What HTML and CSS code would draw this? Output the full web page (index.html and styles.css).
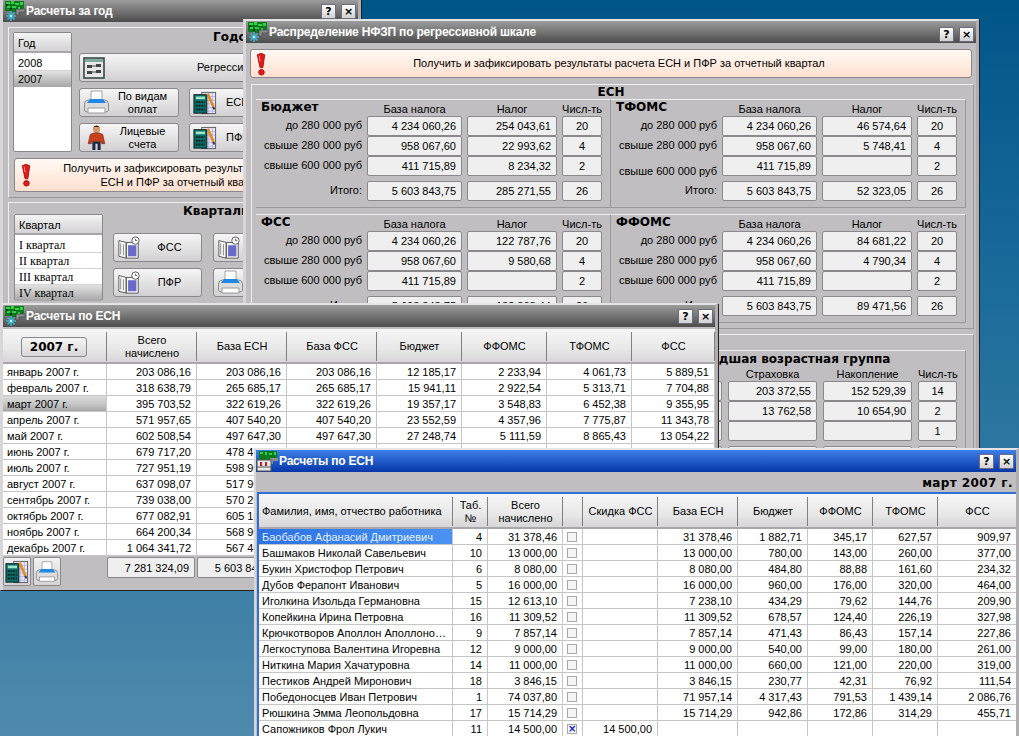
FILE: index.html
```html
<!DOCTYPE html>
<html lang="ru">
<head>
<meta charset="utf-8">
<title>Расчеты</title>
<link rel="stylesheet" href="styles.css">
</head>
<body>
<svg class="defs" aria-hidden="true">
  <symbol id="i-app" viewBox="0 0 24 22">
    <path d="M2 1h19v7l-2 2h-3v2H9v-1H2z" fill="#0a7a1c"/>
    <path d="M3 2h4v2H3zM8 1h3v3H8zM12 3h4v2h-4zM17 2h3v3h-3zM4 6h3v2H4zM9 6h4v2H9zM15 7h2v2h-2z" fill="#35d04a"/>
    <path d="M3 4h2v2H3zM11 5h2v1h-2zM7 8h2v2H7z" fill="#063c10"/>
    <path d="M13 9h9v3h-6v3h-3z" fill="#8c8c8c" stroke="#3c3c3c" stroke-width=".6"/>
    <path d="M8 11v10M3 16h10M4.500 12.500l7 7M11.500 12.500l-7 7" stroke="#3fb4cf" stroke-width="1.600"/>
    <path d="M7 15h2v2H7z" fill="#cfeef5"/>
  </symbol>
  <symbol id="i-app2" viewBox="0 0 24 22">
    <path d="M3 1h18v8h-4v3H9v-1H3z" fill="#0a7a1c"/>
    <path d="M4 2h3v2H4zM9 2h2v3H9zM13 3h3v2h-3zM18 2h2v3h-2z" fill="#35d04a"/>
    <path d="M14 8h8v3h-5v3h-3z" fill="#8c8c8c"/>
    <rect x="1" y="10" width="14" height="11" fill="#e8e8e8" stroke="#555"/>
    <path d="M1 17h14" stroke="#555"/>
    <path d="M4 12h2v4H4zM9 12h2v4H9z" fill="#c02020"/>
  </symbol>
  <symbol id="i-print" viewBox="0 0 27 27">
    <path d="M8 2h11v11H8z" fill="#fff" stroke="#a4a4a4"/>
    <path d="M1.500 15q0-4 4-4h16q4 0 4 4v6q0 2-3 2h-18q-3 0-3-2z" fill="#dcdcdc" stroke="#8c8c8c"/>
    <path d="M7 10h13l3 4H4z" fill="#1f88e4"/>
    <path d="M5 19h17v5H5z" fill="#fff" stroke="#9a9a9a"/>
  </symbol>
  <symbol id="i-calc" viewBox="0 0 26 26">
    <rect x="9.500" y="1.500" width="15" height="23" fill="#e6e6fb" stroke="#555"/>
    <path d="M13 2v22M17 2v22M21 2v22M10 6h14M10 10h14M10 14h14M10 18h14M10 22h14" stroke="#9a9ae0" stroke-width=".6"/>
    <rect x="1" y="4" width="14" height="20" fill="#0c6e68" stroke="#0a1a1a"/>
    <path d="M3 6h10v3H3z" fill="#9fe6c8"/>
    <path d="M3 11h2v2H3zM6 11h2v2H6zM9 11h2v2H9zM12 11h1v2h-1zM3 15h2v2H3zM6 15h2v2H6zM9 15h2v2H9zM12 15h1v2h-1zM3 19h2v2H3zM6 19h2v2H6zM9 19h2v2H9zM12 19h1v2h-1z" fill="#0c2020"/>
    <path d="M16 3l6 14" stroke="#e88c1c" stroke-width="3"/>
    <path d="M22 17l1 3" stroke="#333" stroke-width="2"/>
  </symbol>
  <symbol id="i-man" viewBox="0 0 22 26">
    <circle cx="11" cy="5" r="3.500" fill="#d29a70"/>
    <path d="M7 4q4-5 8 0l-1-1H8z" fill="#3a2414"/>
    <path d="M5 10q6-3 12 0l2 9h-3v-2H6v2H3z" fill="#c8401c" stroke="#6e2010" stroke-width=".6"/>
    <path d="M7 17h8v8h-3v-6h-2v6H7z" fill="#1e2a44"/>
  </symbol>
  <symbol id="i-flow" viewBox="0 0 22 22">
    <rect x="1" y="1" width="20" height="20" fill="#e8e8e8" stroke="#2c3c3c" stroke-width="1.500"/>
    <path d="M2 2h18v3H2z" fill="#7fa8a0"/>
    <path d="M4 8h5v3H4zM13 7h5v3h-5zM4 14h5v3H4zM13 13h5v3h-5z" fill="#444"/>
    <path d="M9 9h4M9 15h4" stroke="#444"/>
  </symbol>
  <symbol id="i-book" viewBox="0 0 26 26">
    <path d="M2 5l8 2v17l-8-2zM10 7h13v17H10z" fill="#f8f8f8" stroke="#555"/>
    <path d="M4 8v12M7 9v12" stroke="#888"/>
    <path d="M12 10h9v12h-9z" fill="#6a6ac8"/>
    <circle cx="20" cy="5" r="4" fill="#fff" stroke="#555"/>
    <path d="M20 3v2h2" stroke="#333" fill="none" stroke-width=".8"/>
  </symbol>
  <symbol id="i-warn" viewBox="0 0 12 26">
    <path d="M2 3q4-3 8 0L8 17H5z" fill="#e41a1a" stroke="#a81010"/>
    <circle cx="6.500" cy="22" r="3" fill="#e41a1a" stroke="#a81010"/>
    <path d="M4 4l1 6" stroke="#ff9a9a"/>
  </symbol>
</svg>

<section class="win w1">
  <header class="title">
    <svg class="appicon"><use href="#i-app"/></svg>
    <span class="caption">Расчеты за год</span>
    <span class="wbtn">?</span><span class="wbtn">×</span>
  </header>
  <div class="group g-year">
    <div class="list list-y">
      <div class="list-h">Год</div>
      <div class="list-r">2008</div>
      <div class="list-r sel">2007</div>
    </div>
    <div class="year-main">
      <h3 class="h-year">Годовые расчеты</h3>
      <div class="btn reg"><svg class="ic22"><use href="#i-flow"/></svg><span class="reg-t">Регрессивная шкала</span></div>
      <div class="year-btns">
        <div class="btn"><svg class="ic27"><use href="#i-print"/></svg><span class="bt">По видам<br>оплат</span></div>
        <div class="btn"><svg class="ic24"><use href="#i-calc"/></svg><span class="bt-l">ЕСН</span></div>
        <div class="btn"><svg class="ic27"><use href="#i-man"/></svg><span class="bt">Лицевые<br>счета</span></div>
        <div class="btn"><svg class="ic24"><use href="#i-calc"/></svg><span class="bt-l">ПФР</span></div>
      </div>
    </div>
    <div class="notice n-year">
      <svg class="warn"><use href="#i-warn"/></svg>
      <span class="n-t">Получить и зафиксировать результаты расчета<br>ЕСН и ПФР за отчетный квартал</span>
    </div>
  </div>
  <div class="group g-q">
    <div class="list list-q">
      <div class="list-h">Квартал</div>
      <div class="list-r">I квартал</div>
      <div class="list-r">II квартал</div>
      <div class="list-r">III квартал</div>
      <div class="list-r sel">IV квартал</div>
    </div>
    <div class="q-main">
      <h3 class="h-q">Квартальные расчеты</h3>
      <div class="q-btns">
        <div class="btn"><svg class="ic24"><use href="#i-book"/></svg><span class="bt">ФСС</span></div>
        <div class="btn"><svg class="ic24"><use href="#i-book"/></svg><span class="bt">ЕСН</span></div>
        <div class="btn"><svg class="ic24"><use href="#i-book"/></svg><span class="bt">ПФР</span></div>
        <div class="btn"><svg class="ic27"><use href="#i-print"/></svg><span class="bt">Печать</span></div>
      </div>
    </div>
  </div>
</section>

<section class="win w2">
  <header class="title">
    <svg class="appicon"><use href="#i-app"/></svg>
    <span class="caption">Распределение НФЗП по регрессивной шкале</span>
    <span class="wbtn">?</span><span class="wbtn">×</span>
  </header>
  <div class="notice n-main">
    <svg class="warn"><use href="#i-warn"/></svg>
    <span class="n-t">Получить и зафиксировать результаты расчета ЕСН и ПФР за отчетный квартал</span>
  </div>
  <div class="group g-esn">
    <h3 class="h-esn">ЕСН</h3>
    <div class="panels">
      <div class="panel">
        <b class="ptitle">Бюджет</b><span class="ch">База налога</span><span class="ch">Налог</span><span class="ch">Числ-ть</span>
        <span class="lab">до 280 000 руб</span><span class="f">4 234 060,26</span><span class="f">254 043,61</span><span class="f c">20</span>
        <span class="lab">свыше 280 000 руб</span><span class="f">958 067,60</span><span class="f">22 993,62</span><span class="f c">4</span>
        <span class="lab">свыше 600 000 руб</span><span class="f">411 715,89</span><span class="f">8 234,32</span><span class="f c">2</span>
        <span class="lab tot">Итого:</span><span class="f tot">5 603 843,75</span><span class="f tot">285 271,55</span><span class="f c tot">26</span>
      </div>
      <div class="panel">
        <b class="ptitle">ТФОМС</b><span class="ch">База налога</span><span class="ch">Налог</span><span class="ch">Числ-ть</span>
        <span class="lab">до 280 000 руб</span><span class="f">4 234 060,26</span><span class="f">46 574,64</span><span class="f c">20</span>
        <span class="lab">свыше 280 000 руб</span><span class="f">958 067,60</span><span class="f">5 748,41</span><span class="f c">4</span>
        <span class="lab low">свыше 600 000 руб</span><span class="f">411 715,89</span><span class="f"></span><span class="f c">2</span>
        <span class="lab tot">Итого:</span><span class="f tot">5 603 843,75</span><span class="f tot">52 323,05</span><span class="f c tot">26</span>
      </div>
      <div class="panel">
        <b class="ptitle">ФСС</b><span class="ch">База налога</span><span class="ch">Налог</span><span class="ch">Числ-ть</span>
        <span class="lab">до 280 000 руб</span><span class="f">4 234 060,26</span><span class="f">122 787,76</span><span class="f c">20</span>
        <span class="lab">свыше 280 000 руб</span><span class="f">958 067,60</span><span class="f">9 580,68</span><span class="f c">4</span>
        <span class="lab">свыше 600 000 руб</span><span class="f">411 715,89</span><span class="f"></span><span class="f c">2</span>
        <span class="lab tot">Итого:</span><span class="f tot">5 603 843,75</span><span class="f tot">132 368,44</span><span class="f c tot">26</span>
      </div>
      <div class="panel">
        <b class="ptitle">ФФОМС</b><span class="ch">База налога</span><span class="ch">Налог</span><span class="ch">Числ-ть</span>
        <span class="lab">до 280 000 руб</span><span class="f">4 234 060,26</span><span class="f">84 681,22</span><span class="f c">20</span>
        <span class="lab">свыше 280 000 руб</span><span class="f">958 067,60</span><span class="f">4 790,34</span><span class="f c">4</span>
        <span class="lab">свыше 600 000 руб</span><span class="f">411 715,89</span><span class="f"></span><span class="f c">2</span>
        <span class="lab tot">Итого:</span><span class="f tot">5 603 843,75</span><span class="f tot">89 471,56</span><span class="f c tot">26</span>
      </div>
    </div>
  </div>
  <div class="group g-pfr">
    <div class="panel-pfr">
      <b class="pf-title">Младшая возрастная группа</b>
      <span></span><span class="ch">Страховка</span><span class="ch">Накопление</span><span class="ch">Числ-ть</span>
      <span class="f stub"></span><span class="f">203 372,55</span><span class="f">152 529,39</span><span class="f c">14</span>
      <span class="f stub"></span><span class="f">13 762,58</span><span class="f">10 654,90</span><span class="f c">2</span>
      <span class="f stub"></span><span class="f"></span><span class="f"></span><span class="f c">1</span>
      <span class="f tot stub"></span><span class="f tot"></span><span class="f tot"></span><span class="f c tot"></span>
    </div>
  </div>
</section>

<section class="win w3">
  <header class="title">
    <svg class="appicon"><use href="#i-app"/></svg>
    <span class="caption">Расчеты по ЕСН</span>
    <span class="wbtn">?</span><span class="wbtn">×</span>
  </header>
  <table class="grid t3">
    <colgroup><col class="a104"><col class="a90"><col class="a90"><col class="a90"><col class="a85"><col class="a85"><col class="a85"><col class="a83"></colgroup>
    <thead>
      <tr><th><span class="yearbtn">2007 г.</span></th><th>Всего<br>начислено</th><th>База ЕСН</th><th>База ФСС</th><th>Бюджет</th><th>ФФОМС</th><th>ТФОМС</th><th>ФСС</th></tr>
    </thead>
    <tbody>
      <tr><td class="l">январь 2007 г.</td><td>203 086,16</td><td>203 086,16</td><td>203 086,16</td><td>12 185,17</td><td>2 233,94</td><td>4 061,73</td><td>5 889,51</td></tr>
      <tr><td class="l">февраль 2007 г.</td><td>318 638,79</td><td>265 685,17</td><td>265 685,17</td><td>15 941,11</td><td>2 922,54</td><td>5 313,71</td><td>7 704,88</td></tr>
      <tr><td class="l grey">март 2007 г.</td><td>395 703,52</td><td>322 619,26</td><td>322 619,26</td><td>19 357,17</td><td>3 548,83</td><td>6 452,38</td><td>9 355,95</td></tr>
      <tr><td class="l">апрель 2007 г.</td><td>571 957,65</td><td>407 540,20</td><td>407 540,20</td><td>23 552,59</td><td>4 357,96</td><td>7 775,87</td><td>11 343,78</td></tr>
      <tr><td class="l">май 2007 г.</td><td>602 508,54</td><td>497 647,30</td><td>497 647,30</td><td>27 248,74</td><td>5 111,59</td><td>8 865,43</td><td>13 054,22</td></tr>
      <tr><td class="l">июнь 2007 г.</td><td>679 717,20</td><td>478 410,00</td><td></td><td></td><td></td><td></td><td></td></tr>
      <tr><td class="l">июль 2007 г.</td><td>727 951,19</td><td>598 900,00</td><td></td><td></td><td></td><td></td><td></td></tr>
      <tr><td class="l">август 2007 г.</td><td>637 098,07</td><td>517 900,00</td><td></td><td></td><td></td><td></td><td></td></tr>
      <tr><td class="l">сентябрь 2007 г.</td><td>739 038,00</td><td>570 200,00</td><td></td><td></td><td></td><td></td><td></td></tr>
      <tr><td class="l">октябрь 2007 г.</td><td>677 082,91</td><td>605 100,00</td><td></td><td></td><td></td><td></td><td></td></tr>
      <tr><td class="l">ноябрь 2007 г.</td><td>664 200,34</td><td>568 900,00</td><td></td><td></td><td></td><td></td><td></td></tr>
      <tr><td class="l">декабрь 2007 г.</td><td>1 064 341,72</td><td>567 400,00</td><td></td><td></td><td></td><td></td><td></td></tr>
    </tbody>
  </table>
  <div class="foot">
    <span class="tool"><svg class="ic24"><use href="#i-calc"/></svg></span>
    <span class="tool"><svg class="ic24"><use href="#i-print"/></svg></span>
    <span class="f sum first">7 281 324,09</span>
    <span class="f sum">5 603 843,75</span>
  </div>
</section>

<section class="win w4">
  <header class="title blue">
    <svg class="appicon"><use href="#i-app2"/></svg>
    <span class="caption">Расчеты по ЕСН</span>
    <span class="wbtn">?</span><span class="wbtn">×</span>
  </header>
  <div class="band">март 2007 г.</div>
  <table class="grid t4">
    <colgroup><col class="b194"><col class="b35"><col class="b75"><col class="b20"><col class="b75"><col class="b80"><col class="b70"><col class="b65"><col class="b65"><col class="b79"></colgroup>
    <thead>
      <tr><th class="tl">Фамилия, имя, отчество работника</th><th>Таб.<br>№</th><th>Всего<br>начислено</th><th></th><th>Скидка ФСС</th><th>База ЕСН</th><th>Бюджет</th><th>ФФОМС</th><th>ТФОМС</th><th>ФСС</th></tr>
    </thead>
    <tbody>
      <tr><td class="l active">Баобабов Афанасий Дмитриевич</td><td>4</td><td>31 378,46</td><td class="cb"><i class="chk"></i></td><td></td><td>31 378,46</td><td>1 882,71</td><td>345,17</td><td>627,57</td><td>909,97</td></tr>
      <tr><td class="l">Башмаков Николай Савельевич</td><td>10</td><td>13 000,00</td><td class="cb"><i class="chk"></i></td><td></td><td>13 000,00</td><td>780,00</td><td>143,00</td><td>260,00</td><td>377,00</td></tr>
      <tr><td class="l">Букин Христофор Петрович</td><td>6</td><td>8 080,00</td><td class="cb"><i class="chk"></i></td><td></td><td>8 080,00</td><td>484,80</td><td>88,88</td><td>161,60</td><td>234,32</td></tr>
      <tr><td class="l">Дубов Ферапонт Иванович</td><td>5</td><td>16 000,00</td><td class="cb"><i class="chk"></i></td><td></td><td>16 000,00</td><td>960,00</td><td>176,00</td><td>320,00</td><td>464,00</td></tr>
      <tr><td class="l">Иголкина Изольда Германовна</td><td>15</td><td>12 613,10</td><td class="cb"><i class="chk"></i></td><td></td><td>7 238,10</td><td>434,29</td><td>79,62</td><td>144,76</td><td>209,90</td></tr>
      <tr><td class="l">Копейкина Ирина Петровна</td><td>16</td><td>11 309,52</td><td class="cb"><i class="chk"></i></td><td></td><td>11 309,52</td><td>678,57</td><td>124,40</td><td>226,19</td><td>327,98</td></tr>
      <tr><td class="l">Крючкотворов Аполлон Аполлоно…</td><td>9</td><td>7 857,14</td><td class="cb"><i class="chk"></i></td><td></td><td>7 857,14</td><td>471,43</td><td>86,43</td><td>157,14</td><td>227,86</td></tr>
      <tr><td class="l">Легкоступова Валентина Игоревна</td><td>12</td><td>9 000,00</td><td class="cb"><i class="chk"></i></td><td></td><td>9 000,00</td><td>540,00</td><td>99,00</td><td>180,00</td><td>261,00</td></tr>
      <tr><td class="l">Ниткина Мария Хачатуровна</td><td>14</td><td>11 000,00</td><td class="cb"><i class="chk"></i></td><td></td><td>11 000,00</td><td>660,00</td><td>121,00</td><td>220,00</td><td>319,00</td></tr>
      <tr><td class="l">Пестиков Андрей Миронович</td><td>18</td><td>3 846,15</td><td class="cb"><i class="chk"></i></td><td></td><td>3 846,15</td><td>230,77</td><td>42,31</td><td>76,92</td><td>111,54</td></tr>
      <tr><td class="l">Победоносцев Иван Петрович</td><td>1</td><td>74 037,80</td><td class="cb"><i class="chk"></i></td><td></td><td>71 957,14</td><td>4 317,43</td><td>791,53</td><td>1 439,14</td><td>2 086,76</td></tr>
      <tr><td class="l">Рюшкина Эмма Леопольдовна</td><td>17</td><td>15 714,29</td><td class="cb"><i class="chk"></i></td><td></td><td>15 714,29</td><td>942,86</td><td>172,86</td><td>314,29</td><td>455,71</td></tr>
      <tr><td class="l">Сапожников Фрол Лукич</td><td>11</td><td>14 500,00</td><td class="cb"><i class="chk on">×</i></td><td>14 500,00</td><td></td><td></td><td></td><td></td><td></td></tr>
    </tbody>
  </table>
</section>
</body>
</html>
```

FILE: styles.css
```css
* { box-sizing: border-box; }
html, body { margin: 0; height: 100%; }
body {
  position: relative;
  overflow: hidden;
  width: 1019px;
  height: 736px;
  background: linear-gradient(#005588 0, #1c6c9b 300px, #3f80a6 600px, #4f8aac 736px);
  font: 11px/13px "Liberation Sans", Arial, sans-serif;
  color: #000;
}
.defs { position: absolute; width: 0; height: 0; }

/* windows */
.win {
  position: absolute;
  display: flex;
  flex-direction: column;
  overflow: hidden;
  background: #c1bec1;
  border-top: 2px solid #e4e4e4;
  border-left: 3px solid #d8d6d8;
  border-right: 3px solid #b0aeb0;
  box-shadow: 1px 1px 0 #222;
}
.win > * { flex: none; }
.w1 { left: 0; top: -2px; width: 361px; height: 306px; z-index: 1; }
.w2 { left: 243px; top: 19px; width: 736px; height: 470px; z-index: 2; }
.w3 { left: 0; top: 303px; width: 718px; height: 287px; z-index: 3; }
.w4 { left: 254px; top: 448px; width: 765px; height: 300px; z-index: 4; border-left-width: 2px; }

.title {
  display: flex;
  align-items: center;
  height: 22px;
  padding-right: 2px;
  background: linear-gradient(#9c9c9c, #4c4c4c);
}
.title.blue { background: linear-gradient(#3d7fe8, #0636a8); }
.appicon { flex: none; width: 24px; height: 22px; margin-right: -1px; }
.caption {
  flex: 1;
  color: #fff;
  font: bold 12px/14px "Liberation Sans", sans-serif;
  letter-spacing: -.2px;
  white-space: nowrap;
}
.wbtn {
  flex: none;
  width: 15px;
  height: 15px;
  margin-left: 5px;
  border: 1px solid #6c6c80;
  border-radius: 1px;
  background: linear-gradient(#fff, #d0d0d0);
  font: bold 11px/13px "DejaVu Sans", sans-serif;
  text-align: center;
}
.w2 .wbtn { margin-top: 4px; }

/* groups, lists, buttons */
.group {
  border: 1px solid;
  border-color: #efefef #9a989a #9a989a #efefef;
}
h3 {
  margin: 0;
  font: bold 12px/14px "DejaVu Sans", sans-serif;
  white-space: nowrap;
}
.g-year {
  display: grid;
  grid-template-columns: 59px 1fr;
  grid-template-rows: 120px auto;
  column-gap: 7px;
  margin: 5px 0 0 5px;
  height: 171px;
  width: 350px;
  padding: 4px 5px 0 4px;
}
.list {
  border: 1px solid #8a888a;
  border-radius: 2px;
  background: #fff;
}
.list-y { height: 120px; }
.list-q { height: 87px; width: 89px; flex: none; }
.list-h {
  height: 20px;
  padding: 4px 4px 0;
  margin-bottom: 2px;
  border-bottom: 2px solid #a8a6a8;
  background: linear-gradient(#f4f4f4, #d4d2d4);
}
.list-r {
  height: 16px;
  padding: 1px 4px 0;
  line-height: 14px;
  border-bottom: 1px solid #d4d4d4;
}
.list-q .list-r { font-family: "Liberation Serif", "Liberation Sans", serif; font-size: 12px; }
.sel { background: linear-gradient(#e2e2e2, #a6a6a6); border-bottom: 0; }
.h-year { height: 23px; margin-top: -2px; padding: 0 0 0 134px; }
.btn {
  display: flex;
  align-items: center;
  height: 29px;
  padding: 0 3px;
  border: 1px solid #8a888a;
  border-radius: 3px;
  background: linear-gradient(#f6f6f6, #d2d0d2);
  overflow: hidden;
}
.bt { flex: 1; text-align: center; white-space: nowrap; }
.bt-l { margin-left: 9px; white-space: nowrap; }
.reg { width: 290px; }
.reg-t { margin-left: 92px; white-space: nowrap; }
.ic22 { flex: none; width: 22px; height: 22px; }
.ic24 { flex: none; width: 24px; height: 24px; }
.ic27 { flex: none; width: 27px; height: 27px; }
.year-btns {
  display: grid;
  grid-template-columns: 100px 100px;
  gap: 6px 10px;
  margin-top: 6px;
}
.notice {
  display: flex;
  align-items: center;
  border: 1px solid #8a888a;
  border-radius: 3px;
  background: linear-gradient(#fffaf4, #ffe0d0);
}
.n-t { flex: 1; text-align: center; white-space: nowrap; }
.warn { flex: none; width: 12px; height: 24px; margin-left: 5px; }
.n-year {
  grid-column: 1 / -1;
  width: 345px;
  height: 34px;
  margin: 6px 0 0 1px;
}
.n-year .n-t { padding-right: 22px; line-height: 14px; }
.g-q {
  display: flex;
  gap: 10px;
  margin: 4px 0 0 5px;
  width: 350px;
  height: 110px;
  padding: 11px 0 0 5px;
}
.q-main { flex: 1; }
.h-q { height: 23px; margin-top: -10px; padding-left: 70px; }
.q-btns {
  display: grid;
  grid-template-columns: 89px 89px;
  gap: 6px 11px;
  margin-top: 6px;
}

/* distribution window */
.n-main { height: 29px; margin: 6px 4px 0 4px; }
.n-main .warn { margin-left: 4px; }
.g-esn {
  height: 245px;
  margin: 6px 2px 0 5px;
  padding: 0 7px 0 4px;
}
.h-esn { height: 14px; text-align: center; }
.panels {
  display: grid;
  grid-template-columns: 355px 355px;
  grid-auto-rows: 109px;
  row-gap: 6px;
}
.panel, .panel-pfr {
  display: grid;
  border: 1px solid;
  border-color: #efefef #9a989a #9a989a #efefef;
  border-left-width: 0;
}
.panel {
  grid-template-columns: 106px 95px 90px 40px;
  grid-template-rows: 16px 20px 20px 20px 25px;
  column-gap: 5px;
}
.ptitle { padding-left: 5px; font: bold 12px/14px "DejaVu Sans", sans-serif; white-space: nowrap; }
.ch { text-align: center; align-self: end; white-space: nowrap; line-height: 14px; }
.lab { text-align: right; white-space: nowrap; line-height: 18px; }
.lab.low { padding-top: 8px; line-height: 14px; }
.f {
  padding: 0 5px;
  height: 20px;
  border: 1px solid #8a888a;
  border-radius: 2px;
  background: #efefef;
  text-align: right;
  line-height: 19px;
  white-space: nowrap;
}
.f.c { text-align: center; }
.f.tot, .lab.tot { margin-top: 5px; }
.g-pfr { height: 140px; margin: 5px 2px 0 5px; padding: 15px 7px 0 359px; }
.panel-pfr {
  grid-template-columns: 111px 89px 89px 39px;
  grid-template-rows: 15px 15px 20px 20px 20px 25px;
  column-gap: 6px;
  width: 355px;
  height: 125px;
}
.pf-title { grid-column: 1 / -1; padding-left: 79px; font: bold 12px/16px "DejaVu Sans", sans-serif; white-space: nowrap; }

/* tables */
.grid {
  border-collapse: separate;
  border-spacing: 0;
  table-layout: fixed;
  background: #fff;
}
.t3 { width: 712px; margin-top: 2px; }
.t4 { width: 758px; margin-left: 1px; border-top: 2px solid #2f6fd8; border-left: 2px solid #2f6fd8; }
.a104 { width: 104px; } .a90 { width: 90px; } .a85 { width: 85px; } .a83 { width: 83px; }
.b194 { width: 194px; } .b35 { width: 35px; } .b75 { width: 75px; } .b20 { width: 20px; }
.b80 { width: 80px; } .b70 { width: 70px; } .b65 { width: 65px; } .b79 { width: 79px; }
th {
  height: 35px;
  padding: 2px 2px 0;
  font-weight: normal;
  line-height: 13px;
  border-bottom: 2px solid #a8a6a8;
  background:
    linear-gradient(#808080, #808080) right 3px / 1px 29px no-repeat,
    linear-gradient(#f6f6f6, #e8e8e8 60%, #d8d6d8);
}
th.tl { text-align: left; padding-left: 3px; }
.grid td {
  height: 16px;
  padding: 1px 5px 0 0;
  line-height: 14px;
  text-align: right;
  white-space: nowrap;
  overflow: hidden;
  border-right: 1px solid #c6c6c6;
  border-bottom: 1px solid #c6c6c6;
}
.grid td.l { padding-left: 4px; text-align: left; }
.t4 td.l { padding-left: 3px; }
.grid td.grey { background: linear-gradient(#dcdcdc, #c8c8c8 50%, #a8a8a8); }
.grid td.active { background: linear-gradient(90deg, #2c72e4, #4a92f2); color: #e4f0ff; }
.grid td.cb { padding: 0 0 0 4px; text-align: left; }
.chk {
  display: block;
  width: 10px;
  height: 10px;
  border: 1px solid #a8a8a8;
  background: #f4f4f4;
  font: bold 10px/8px "DejaVu Sans", sans-serif;
  color: #1414d8;
  text-align: center;
}
.yearbtn {
  display: block;
  width: 66px;
  height: 20px;
  margin: 0 0 0 16px;
  border: 1px solid #8a888a;
  border-radius: 3px;
  background: linear-gradient(#f6f6f6, #d8d6d8);
  font: bold 12px/18px "DejaVu Sans", sans-serif;
}
.foot { display: flex; align-items: flex-start; gap: 2px; height: 33px; padding-top: 1px; }
.tool {
  display: flex;
  align-items: center;
  justify-content: center;
  width: 28px;
  height: 29px;
  border: 1px solid #8a888a;
  border-radius: 2px;
  background: linear-gradient(#f2f2f2, #d6d4d6);
}
.sum { width: 88px; height: 21px; line-height: 20px; }
.sum.first { margin-left: 44px; }
.band {
  height: 20px;
  padding-right: 3px;
  text-align: right;
  font: bold 12px/22px "DejaVu Sans", sans-serif;
  letter-spacing: .4px;
}
```
